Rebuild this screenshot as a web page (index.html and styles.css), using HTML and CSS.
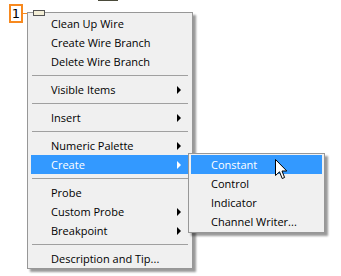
FILE: index.html
```html
<!DOCTYPE html>
<html lang="en">
<head>
    <meta charset="UTF-8">
    <title>Wire Menu</title>
    <link rel="stylesheet" href="styles.css">
</head>
<body>
    <div class="canvas">
        <div class="wire-top"></div>
        <div class="wire-stub"></div>
        <div class="badge">1</div>
        <div class="badge-line"></div>

        <ul class="menu">
            <li class="item">Clean Up Wire</li>
            <li class="item">Create Wire Branch</li>
            <li class="item">Delete Wire Branch</li>
            <li class="sep"></li>
            <li class="item sub">Visible Items</li>
            <li class="sep"></li>
            <li class="item sub">Insert</li>
            <li class="sep"></li>
            <li class="item sub">Numeric Palette</li>
            <li class="item sub active">Create
                <ul class="menu submenu">
                    <li class="item active">Constant</li>
                    <li class="item">Control</li>
                    <li class="item">Indicator</li>
                    <li class="item">Channel Writer...</li>
                </ul>
            </li>
            <li class="sep"></li>
            <li class="item">Probe</li>
            <li class="item sub">Custom Probe</li>
            <li class="item sub">Breakpoint</li>
            <li class="sep"></li>
            <li class="item">Description and Tip...</li>
        </ul>

        <svg class="cursor" width="13" height="21" viewBox="0 0 13 21">
            <path d="M0.5 0.5 L0.5 16.5 L4.5 12.8 L7.2 19.5 L9.6 18.5 L7 12 L11.8 12 Z" fill="#fff" stroke="#000" stroke-width="1" stroke-linejoin="miter"/>
        </svg>
    </div>
</body>
</html>
```

FILE: styles.css
```css
body {
    margin: 0;
    background: #fff;
    font-family: "Open Sans", "DejaVu Sans", sans-serif;
    font-size: 11px;
    color: #000;
}
.canvas {
    position: relative;
    width: 341px;
    height: 276px;
    padding: 12px 0 0 27px;
    box-sizing: border-box;
}

/* bits of the diagram behind the menu */
.wire-top {
    position: absolute;
    left: 98px;
    top: 0;
    width: 20px;
    height: 1px;
    background: #4a4a3a;
}
.wire-stub {
    position: absolute;
    left: 33px;
    top: 10px;
    width: 10px;
    height: 4px;
    border: 1px solid #555;
    background: #f3eed6;
}
.badge {
    position: absolute;
    left: 9px;
    top: 4px;
    width: 14px;
    height: 19px;
    box-sizing: border-box;
    border: 2px solid #f7891f;
    background: #fff;
    font-family: "DejaVu Sans", sans-serif;
    font-size: 13px;
    line-height: 15px;
    text-align: center;
}
.badge-line {
    position: absolute;
    left: 23px;
    top: 13px;
    width: 4px;
    height: 1px;
    background: #f7891f;
}

.menu {
    list-style: none;
    margin: 0;
    width: 166px;
    box-sizing: border-box;
    padding: 1px 2px 0 3px;
    background: #f0f0f0;
    border: 1px solid #979797;
    box-shadow: 3px 3px 2px rgba(0, 0, 0, 0.4);
}
.item {
    position: relative;
    height: 19px;
    line-height: 19px;
    padding-left: 20px;
    white-space: nowrap;
}
.item.active {
    background: #3399ff;
    color: #fff;
}
.sub::after {
    content: "";
    position: absolute;
    right: 9px;
    top: 6px;
    border-left: 4px solid #000;
    border-top: 4px solid transparent;
    border-bottom: 4px solid transparent;
}
.sub.active::after {
    border-left-color: #fff;
}
.sep {
    height: 9px;
    position: relative;
}
.sep::before {
    content: "";
    position: absolute;
    left: 1px;
    right: 2px;
    top: 4px;
    height: 1px;
    background: #a0a0a0;
}

.submenu {
    position: absolute;
    left: 157px;
    top: -2px;
    width: 137px;
    padding: 1px 2px;
    color: #000;
}
.cursor {
    position: absolute;
    left: 275px;
    top: 159px;
}
```
